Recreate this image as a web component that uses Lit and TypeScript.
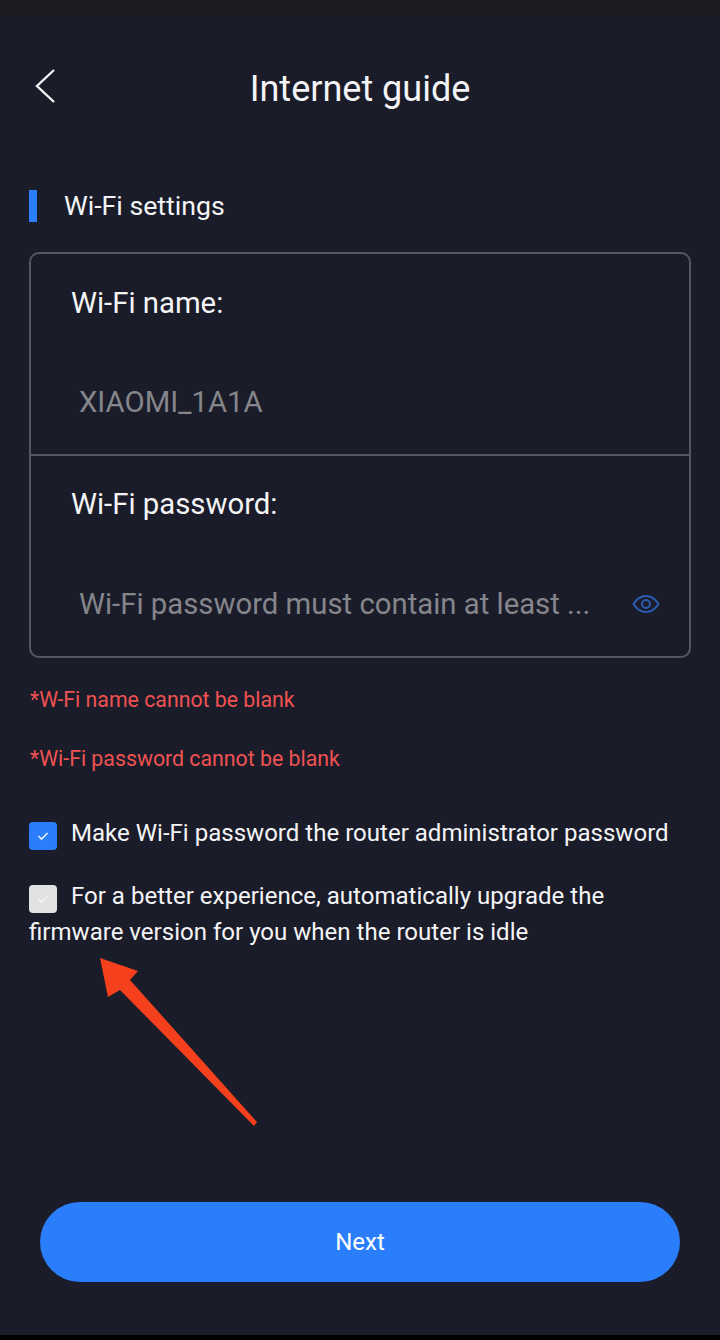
import { LitElement, html, css } from 'lit';
import { customElement } from 'lit/decorators.js';

@customElement('app-root')
export class AppRoot extends LitElement {
    static styles = css`
        :host {
            display: block;
            position: relative;
            width: 720px;
            height: 1340px;
            overflow: hidden;
            background: #1b1c29;
            color: #f4f4f6;
            font-family: Roboto, "Liberation Sans", sans-serif;
        }

        .page {
            display: flex;
            flex-direction: column;
            height: 1340px;
            box-sizing: border-box;
        }

        .status {
            height: 16px;
            flex: none;
            background: #1c1c20;
        }

        .header {
            display: flex;
            align-items: center;
            justify-content: center;
            position: relative;
            height: 60px;
            margin-top: 43px;
            font-size: 36px;
        }

        .back {
            position: absolute;
            left: 35px;
            top: 9px;
        }

        .section {
            display: flex;
            align-items: center;
            gap: 27px;
            margin: 71px 0 0 29px;
            height: 32px;
            font-size: 26.7px;
        }

        .section i {
            width: 8px;
            height: 32px;
            background: #2b7efb;
        }

        .card {
            margin: 30px 29px 0;
            height: 406px;
            box-sizing: border-box;
            border: 2px solid #55565e;
            border-radius: 10px;
        }

        .row {
            height: 200px;
            box-sizing: border-box;
            padding: 29px 0 0 40px;
        }

        .row + .row {
            height: 202px;
            padding-top: 28px;
            border-top: 2px solid #55565e;
        }

        .label {
            font-size: 29.3px;
            line-height: 40px;
        }

        .value {
            display: flex;
            align-items: center;
            justify-content: space-between;
            margin: 59px 29px 0 8px;
            font-size: 29.3px;
            line-height: 40px;
            color: #85868b;
        }

        .row + .row .value {
            margin-top: 60px;
        }

        .errors {
            display: flex;
            flex-direction: column;
            gap: 33px;
            margin: 29px 0 0 30px;
            font-size: 21.3px;
            line-height: 26px;
            color: #f05252;
        }

        .check {
            margin: 43px 29px 0;
            font-size: 24.05px;
            line-height: 36px;
        }

        .check + .check {
            margin-top: 27px;
        }

        .box {
            display: inline-flex;
            align-items: center;
            justify-content: center;
            width: 28px;
            height: 28px;
            margin: 7px 14px 0 0;
            border-radius: 4px;
            background: #2b7efb;
            vertical-align: top;
        }

        .box.off {
            background: #e2e2e2;
        }

        .next {
            display: flex;
            align-items: center;
            justify-content: center;
            height: 80px;
            margin: auto 40px 53px;
            border-radius: 40px;
            background: #2b7efb;
            color: #fff;
            font-size: 24px;
        }

        .foot {
            height: 5px;
            flex: none;
            background: #000;
        }

        .arrow {
            position: absolute;
            left: 0;
            top: 0;
        }
    `;

    render() {
        return html`
            <div class="page">
                <div class="status"></div>
                <div class="header">
                    <svg class="back" width="22" height="36" viewBox="0 0 22 36" fill="none">
                        <path d="M19 2 2 18l17 16" stroke="#f4f4f6" stroke-width="2.4"/>
                    </svg>
                    Internet guide
                </div>
                <div class="section"><i></i>Wi-Fi settings</div>
                <div class="card">
                    <div class="row">
                        <div class="label">Wi-Fi name:</div>
                        <div class="value">XIAOMI_1A1A</div>
                    </div>
                    <div class="row">
                        <div class="label">Wi-Fi password:</div>
                        <div class="value">
                            Wi-Fi password must contain at least ...
                            <svg width="28" height="20" viewBox="0 0 28 20" fill="none" stroke="#2a5cb0" stroke-width="2">
                                <path d="M1.500 10C5 4.500 9 2 14 2s9 2.500 12.500 8C23 15.500 19 18 14 18S5 15.500 1.500 10Z"/>
                                <circle cx="14" cy="10" r="4"/>
                            </svg>
                        </div>
                    </div>
                </div>
                <div class="errors">
                    <div>*W-Fi name cannot be blank</div>
                    <div>*Wi-Fi password cannot be blank</div>
                </div>
                <div class="check">
                    <span class="box">
                        <svg width="12" height="10" viewBox="0 0 12 10" fill="none">
                            <path d="M1.500 5 4.500 8 10.500 2" stroke="#e6efff" stroke-width="1.600"/>
                        </svg>
                    </span>Make Wi-Fi password the router administrator password
                </div>
                <div class="check">
                    <span class="box off">
                        <svg width="12" height="10" viewBox="0 0 12 10" fill="none">
                            <path d="M1.500 5 4.500 8 10.500 2" stroke="#f4f4f4" stroke-width="1.600"/>
                        </svg>
                    </span>For a better experience, automatically upgrade the firmware version for you when the router is idle
                </div>
                <div class="next">Next</div>
                <div class="foot"></div>
            </div>
            <svg class="arrow" width="720" height="1340" viewBox="0 0 720 1340">
                <path d="M100 958 138 971 130 980 257 1122 254 1126 120 990 108 997Z" fill="#f4401c"/>
            </svg>
        `;
    }
}
